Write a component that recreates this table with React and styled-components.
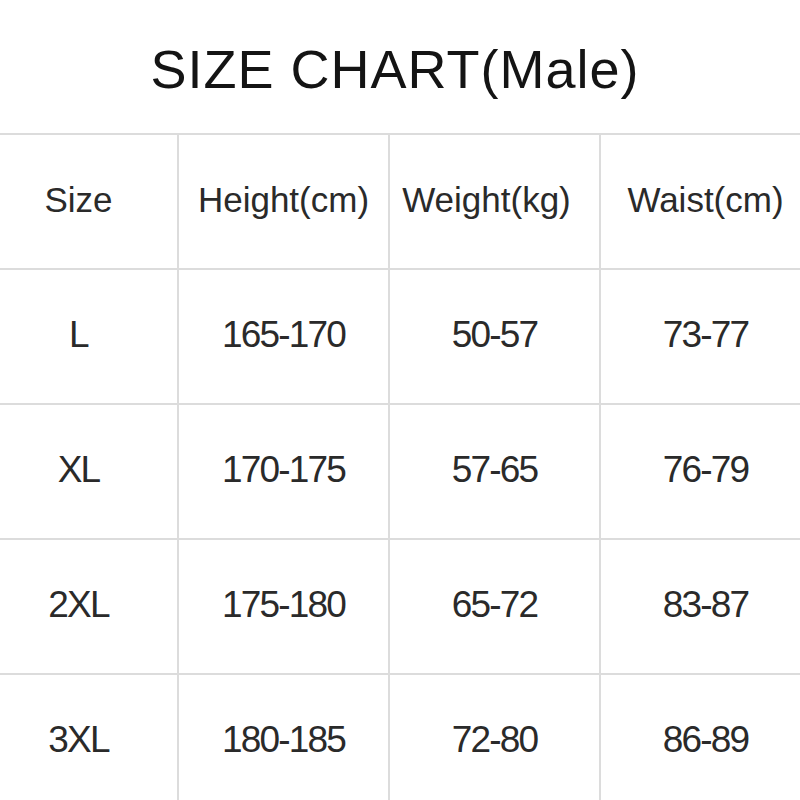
import React from "react";
import styled, { createGlobalStyle } from "styled-components";

const Global = createGlobalStyle`
  html, body {
    margin: 0;
    padding: 0;
    background: #ffffff;
    overflow: hidden;
  }
  body {
    font-family: "Liberation Sans", Arial, Helvetica, sans-serif;
  }
`;

const Page = styled.div`
  width: 800px;
  height: 800px;
  overflow: hidden;
  background: #ffffff;
`;

const Title = styled.h1`
  margin: 0;
  height: 133px;
  display: flex;
  align-items: center;
  justify-content: center;
  padding-right: 10px;
  padding-top: 4px;
  box-sizing: border-box;
  font-size: 54px;
  font-weight: 400;
  letter-spacing: 1px;
  color: #141414;
`;

const Table = styled.div`
  display: grid;
  grid-template-columns: 199px 211px 211px 209px;
  margin-left: -20px;
  border-top: 2px solid #dcdcdc;
`;

const Cell = styled.div`
  display: flex;
  align-items: center;
  justify-content: center;
  box-sizing: content-box;
  height: 130px;
  padding-bottom: 3px;
  padding-right: ${(p) => p.$shift || 0}px;
  border-bottom: 2px solid #dcdcdc;
  border-right: ${(p) => (p.$last ? "none" : "2px solid #dcdcdc")};
  color: #2a2a2a;
  white-space: nowrap;
`;

const HeadText = styled.span`
  font-size: 35px;
`;

const DataText = styled.span`
  font-size: 37px;
  letter-spacing: -1.8px;
`;

const header = ["Size", "Height(cm)", "Weight(kg)", "Waist(cm)"];
const headShift = [0, 0, 16, 0];
const rows = [
  ["L", "165-170", "50-57", "73-77"],
  ["XL", "170-175", "57-65", "76-79"],
  ["2XL", "175-180", "65-72", "83-87"],
  ["3XL", "180-185", "72-80", "86-89"],
];

export default function App() {
  return (
    <Page>
      <Global />
      <Title>SIZE CHART(Male)</Title>
      <Table>
        {header.map((h, i) => (
          <Cell key={h} $last={i === 3} $shift={headShift[i]}>
            <HeadText>{h}</HeadText>
          </Cell>
        ))}
        {rows.map((r) =>
          r.map((v, i) => (
            <Cell key={r[0] + i} $last={i === 3}>
              <DataText>{v}</DataText>
            </Cell>
          ))
        )}
      </Table>
    </Page>
  );
}
